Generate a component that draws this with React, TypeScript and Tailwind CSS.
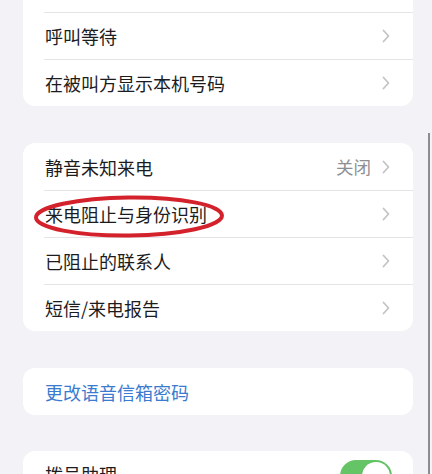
import React from "react";

const FONT = { fontFamily: '"Noto Sans CJK SC", "Noto Sans", sans-serif' };

function Chevron() {
  return (
    <svg width="8" height="14" viewBox="0 0 8 14" className="shrink-0">
      <path d="M1.5 1.5 L6.5 7 L1.5 12.5" fill="none" stroke="#c4c4c7" strokeWidth="1.8" strokeLinecap="round" strokeLinejoin="round" />
    </svg>
  );
}

function Row({ label, value, first, chevron = true, blue }: { label: string; value?: string; first?: boolean; chevron?: boolean; blue?: boolean }) {
  return (
    <div className="relative h-[47px] flex items-center pl-[22px] pr-[23px]">
      {!first && <div className="absolute top-0 left-[21px] right-0 h-px bg-[#e4e4e7]" />}
      <span className={`flex-1 text-[18px] leading-none ${blue ? "text-[#3a7bd0]" : "text-[#1c1c1e]"}`}>{label}</span>
      {value && <span className="text-[17.5px] text-[#8e8e93] mr-[11px] leading-none">{value}</span>}
      {chevron && <Chevron />}
    </div>
  );
}

export default function App() {
  return (
    <div className="relative w-[432px] h-[474px] overflow-hidden bg-[#f2f2f7]" style={FONT}>
      <div className="flex flex-col pl-[23px] pr-[19px] -mt-[35px]">
        <div className="bg-white rounded-[12px] overflow-hidden">
          <Row label="" first chevron={false} />
          <Row label="呼叫等待" />
          <Row label="在被叫方显示本机号码" />
        </div>

        <div className="bg-white rounded-[12px] overflow-hidden mt-[37px]">
          <Row label="静音未知来电" value="关闭" first />
          <Row label="来电阻止与身份识别" />
          <Row label="已阻止的联系人" />
          <Row label="短信/来电报告" />
        </div>

        <div className="bg-white rounded-[12px] overflow-hidden mt-[37px]">
          <Row label="更改语音信箱密码" first chevron={false} blue />
        </div>

        <div className="bg-white rounded-[12px] overflow-hidden mt-[36px] h-[60px] flex items-start pl-[22px] pr-[21px] pt-[9px]">
          <span className="flex-1 text-[18px] text-[#1c1c1e] mt-[5px] leading-none">拨号助理</span>
          <div className="w-[52px] h-[32px] rounded-full bg-[#65c466] flex items-center justify-end pr-[2px]">
            <div className="w-[28px] h-[28px] rounded-full bg-white shadow" />
          </div>
        </div>
      </div>

      {/* red hand-drawn circle */}
      <svg className="absolute left-[30px] top-[194px] pointer-events-none" width="200" height="46" viewBox="0 0 200 46">
        <ellipse cx="99" cy="22.5" rx="93" ry="19" fill="none" stroke="#d3222c" strokeWidth="4" transform="rotate(-0.6 100 22.5)" />
      </svg>

      {/* scrollbar-like edge line */}
      <div className="absolute right-[2px] top-[133px] bottom-0 w-[2px] bg-[#8d8d90]" />
    </div>
  );
}
